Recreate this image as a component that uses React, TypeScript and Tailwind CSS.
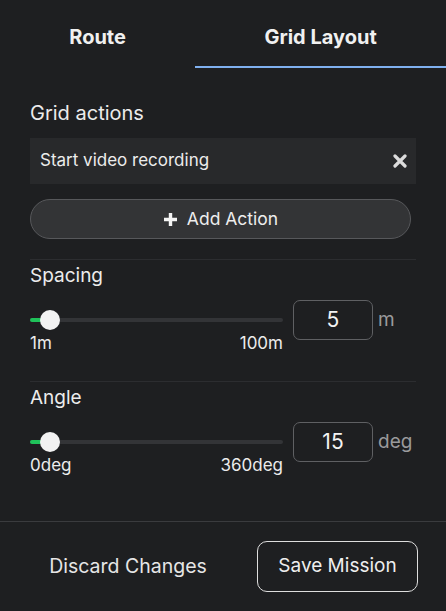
import React from "react";

function Slider({ pct }: { pct: number }) {
  return (
    <div className="relative h-[20px] w-full flex items-center">
      <div className="h-[4px] w-full rounded-full bg-[#333437]" />
      <div className="absolute left-0 h-[4px] w-[16px] rounded-full bg-[#1fc25a]" />
      <div className="absolute h-[20px] w-[20px] rounded-full bg-[#f2f2f2]" style={{ left: `${pct}px` }} />
    </div>
  );
}

function SliderBlock({ label, min, max, value, unit }: { label: string; min: string; max: string; value: string; unit: string }) {
  return (
    <div className="flex flex-col">
      <div className="text-[19px] leading-[24px] text-[#ececec] mt-[4px]">{label}</div>
      <div className="flex items-start mt-[12px]">
        <div className="w-[253px] flex flex-col">
          <div className="mt-[10px]">
            <Slider pct={10} />
          </div>
          <div className="flex justify-between text-[17px] leading-[20px] text-[#ececec] mt-[3px]">
            <span>{min}</span>
            <span>{max}</span>
          </div>
        </div>
        <div className="ml-[10px] w-[80px] h-[40px] rounded-[7px] border border-[#5f6063] flex items-center justify-center text-[21px] text-[#f2f2f2]">
          {value}
        </div>
        <div className="ml-[5px] mt-[6px] text-[19px] text-[#9a9a9c]">{unit}</div>
      </div>
    </div>
  );
}

export default function App() {
  return (
    <div
      className="w-[446px] h-[611px] bg-[#1e1f21] flex flex-col text-[#ececec]"
      style={{ fontFamily: "Inter, 'Noto Sans', sans-serif" }}
    >
      <div className="flex h-[68px]">
        <div className="flex-auto flex items-center justify-center pt-[8px] pb-[2px] text-[20px] font-bold text-[#f0f0f0]">Route</div>
        <div className="flex-auto flex items-center justify-center pt-[8px] text-[20px] font-bold text-[#f0f0f0] border-b-2 border-[#7fb0ef]">
          Grid Layout
        </div>
      </div>
      <div className="flex-1 px-[30px] pt-[32px] flex flex-col">
        <div className="text-[20px] leading-[26px]">Grid actions</div>
        <div className="mt-[12px] h-[46px] bg-[#28292b] flex items-center justify-between pl-[10px] pr-[9px]">
          <span className="text-[17px]">Start video recording</span>
          <svg width="14" height="14" viewBox="0 0 14 14">
            <path d="M2 2 L12 12 M12 2 L2 12" stroke="#dcdcdc" strokeWidth="3.2" strokeLinecap="round" />
          </svg>
        </div>
        <div className="mt-[15px] mr-[5px] h-[40px] rounded-full border border-[#57585b] bg-[#333436] flex items-center justify-center gap-[9px]">
          <svg width="15" height="15" viewBox="0 0 15 15">
            <path d="M7.5 1 V14 M1 7.5 H14" stroke="#f4f4f4" strokeWidth="3.4" />
          </svg>
          <span className="text-[17.5px] text-[#ededed]">Add Action</span>
        </div>
        <div className="mt-[20px] h-px bg-[#2c2d30]" />
        <SliderBlock label="Spacing" min="1m" max="100m" value="5" unit="m" />
        <div className="mt-[28px] h-px bg-[#2c2d30]" />
        <SliderBlock label="Angle" min="0deg" max="360deg" value="15" unit="deg" />
      </div>
      <div className="h-px bg-[#3a3b3e]" />
      <div className="h-[89px] flex items-center px-[28px]">
        <div className="w-[200px] text-center text-[19.5px] text-[#e6e6e6]">Discard Changes</div>
        <div className="ml-auto w-[161px] h-[51px] rounded-[10px] border border-[#dedede] flex items-center justify-center text-[19px] text-[#eeeeee]">
          Save Mission
        </div>
      </div>
    </div>
  );
}
